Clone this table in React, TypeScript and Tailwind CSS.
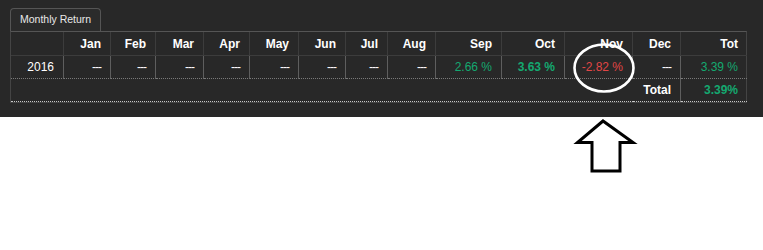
import React from "react";

const cols = [
  { k: "", w: 54 },
  { k: "Jan", w: 47 },
  { k: "Feb", w: 45 },
  { k: "Mar", w: 48 },
  { k: "Apr", w: 46 },
  { k: "May", w: 49 },
  { k: "Jun", w: 47 },
  { k: "Jul", w: 42 },
  { k: "Aug", w: 48 },
  { k: "Sep", w: 66 },
  { k: "Oct", w: 63 },
  { k: "Nov", w: 68 },
  { k: "Dec", w: 48 },
  { k: "Tot", w: 66 },
];

type Cell = { t: string; c?: "g" | "r"; b?: boolean };

const row: Cell[] = [
  { t: "2016" },
  { t: "---" },
  { t: "---" },
  { t: "---" },
  { t: "---" },
  { t: "---" },
  { t: "---" },
  { t: "---" },
  { t: "---" },
  { t: "2.66 %", c: "g" },
  { t: "3.63 %", c: "g", b: true },
  { t: "-2.82 %", c: "r" },
  { t: "---" },
  { t: "3.39 %", c: "g" },
];

export default function App() {
  return (
    <div className="relative h-[250px] w-[763px] bg-white font-['Liberation_Sans',Arial,sans-serif]">
      <div className="h-[117px] bg-[#282828] pl-[10px] pt-[8px]">
        <div className="flex">
          <div className="flex h-[23px] w-[91px] items-center rounded-t-[4px] border border-b-0 border-[#555] bg-[#2b2b2b] pl-[9px] text-[10.5px] text-[#e8e8e8]">
            Monthly Return
          </div>
          <div className="flex-1" />
        </div>
        <div className="w-[737px] border-x border-b border-[#444] border-t border-t-[#555]">
          <table className="w-full table-fixed border-separate border-spacing-0 text-[12px]">
            <colgroup>
              {cols.map((c, i) => (
                <col key={i} style={{ width: c.w - (i === 0 ? 1 : 0) }} />
              ))}
            </colgroup>
            <thead>
              <tr>
                {cols.map((c, i) => (
                  <th
                    key={i}
                    className={`h-[24px] border-b border-[#3c3c3c] pr-[9px] text-right font-bold text-white ${
                      i < cols.length - 1 ? "border-r" : ""
                    }`}
                  >
                    {c.k}
                  </th>
                ))}
              </tr>
            </thead>
            <tbody>
              <tr>
                {row.map((c, i) => (
                  <td
                    key={i}
                    className={`h-[23px] border-b border-dotted border-b-[#7a7a7a] pr-[9px] text-right ${
                      i < row.length - 1 ? "border-r border-r-[#5e5e5e]" : ""
                    } ${c.b ? "font-bold" : ""} ${c.t === "---" ? "tracking-[-1px]" : ""} ${
                      c.c === "g" ? "text-[#14a870]" : c.c === "r" ? "text-[#e04646]" : "text-white"
                    }`}
                    style={{ borderRightStyle: "solid" }}
                  >
                    {c.t}
                  </td>
                ))}
              </tr>
              <tr>
                <td colSpan={12} className="h-[23px] border-b border-dotted border-[#c8c8c8]" />
                <td
                  className="h-[23px] border-b border-r border-dotted border-b-[#c8c8c8] border-r-[#5e5e5e] pr-[9px] text-right font-bold text-white"
                  style={{ borderRightStyle: "solid" }}
                >
                  Total
                </td>
                <td className="h-[23px] border-b border-dotted border-[#c8c8c8] pr-[9px] text-right font-bold text-[#14a870]">
                  3.39%
                </td>
              </tr>
            </tbody>
          </table>
        </div>
      </div>

      <svg className="pointer-events-none absolute left-[570px] top-[40px]" width="70" height="58" viewBox="0 0 70 58">
        <ellipse cx="34" cy="28" rx="29.5" ry="23.5" fill="none" stroke="white" strokeWidth="2.6" />
      </svg>

      <svg className="pointer-events-none absolute left-[570px] top-[115px]" width="70" height="62" viewBox="0 0 70 62">
        <path
          d="M33 6 L7.5 27.5 L22 27.5 L22 56 L50 56 L50 27.5 L63 27.5 Z"
          fill="white"
          stroke="black"
          strokeWidth="3"
          strokeLinejoin="miter"
        />
      </svg>
    </div>
  );
}
